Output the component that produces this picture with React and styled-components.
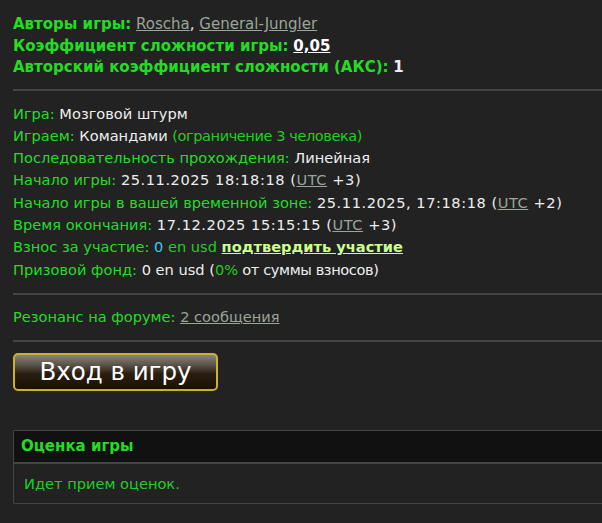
import styled, { createGlobalStyle } from 'styled-components';

const GlobalStyle = createGlobalStyle`
  html, body {
    margin: 0;
    padding: 0;
    background: #222222;
  }
  body {
    font-family: "DejaVu Sans", Verdana, sans-serif;
    font-size: 14.6px;
    color: #eeeeee;
  }
`;

const Page = styled.div`
  padding: 14px 0 0 13px;
  overflow: hidden;
`;

const Section = styled.div`
  line-height: ${({ $lh }) => $lh || '22.3px'};
  font-size: ${({ $fs }) => $fs || 'inherit'};
  padding: ${({ $pad }) => $pad || '0'};
`;

const Row = styled.div`
  white-space: nowrap;
`;

const Label = styled.span`
  color: #22dd22;
  font-weight: ${({ $bold }) => ($bold ? 'bold' : 'normal')};
`;

const Value = styled.span`
  color: ${({ $tone }) =>
    $tone === 'green' ? '#22cc22' : $tone === 'cyan' ? '#33ccee' : '#eeeeee'};
  font-weight: ${({ $bold }) => ($bold ? 'bold' : 'normal')};
  letter-spacing: ${({ $track }) => $track || 'normal'};
`;

const Link = styled.a`
  color: #9aa59a;
  text-decoration: underline;
  cursor: pointer;
`;

const StrongLink = styled.a`
  color: #ffffff;
  font-weight: bold;
  text-decoration: underline;
`;

const ConfirmLink = styled.a`
  color: #ccff88;
  font-weight: bold;
  text-decoration: underline;
`;

const Divider = styled.hr`
  border: 0;
  border-top: 2px solid #444444;
  margin: ${({ $m }) => $m || '0'};
`;

const EnterButton = styled.button`
  display: block;
  width: 205px;
  height: 38px;
  margin: 11px 0 0;
  padding: 0 0 2px;
  border: 2px solid #c9b22a;
  border-radius: 5px;
  background: linear-gradient(
    to bottom,
    #8a8478 0%,
    #5a5248 30%,
    #2a1e10 55%,
    #1a1005 100%
  );
  color: #ffffff;
  font-family: "DejaVu Sans", Verdana, sans-serif;
  font-size: 24.5px;
  cursor: pointer;
`;

const RatingBox = styled.div`
  margin: 39px -4px 0 0;
  border: 1px solid #444444;
  border-right: 0;
  border-radius: 2px 0 0 2px;
`;

const RatingHead = styled.div`
  background: #111111;
  border-bottom: 2px solid #444444;
  height: 31px;
  line-height: 31px;
  padding-left: 7px;
  color: #22dd22;
  font-weight: bold;
  font-size: 15px;
`;

const RatingBody = styled.div`
  height: 39px;
  line-height: 39px;
  padding-left: 10px;
  color: #22cc22;
`;

const DATE_TRACK = '0.55px';

export default function App() {
  return (
    <>
      <GlobalStyle />
      <Page>
        <Section $lh="21.5px" $fs="15px">
          <Row>
            <Label $bold>Авторы игры:</Label> <Link>Roscha</Link>, <Link>General-Jungler</Link>
          </Row>
          <Row>
            <Label $bold>Коэффициент сложности игры:</Label> <StrongLink>0,05</StrongLink>
          </Row>
          <Row>
            <Label $bold>Авторский коэффициент сложности (АКС):</Label> <Value $bold>1</Value>
          </Row>
        </Section>
        <Divider $m="10px 0 12px" />
        <Section>
          <Row>
            <Label>Игра:</Label> <Value>Мозговой штурм</Value>
          </Row>
          <Row>
            <Label>Играем:</Label> <Value>Командами</Value>{' '}
            <Value $tone="green" $track="-0.45px">(ограничение 3 человека)</Value>
          </Row>
          <Row>
            <Label>Последовательность прохождения:</Label> <Value>Линейная</Value>
          </Row>
          <Row>
            <Label>Начало игры:</Label>{' '}
            <Value $track={DATE_TRACK}>25.11.2025 18:18:18 (<Link>UTC</Link> +3)</Value>
          </Row>
          <Row>
            <Label>Начало игры в вашей временной зоне:</Label>{' '}
            <Value $track={DATE_TRACK}>25.11.2025, 17:18:18 (<Link>UTC</Link> +2)</Value>
          </Row>
          <Row>
            <Label>Время окончания:</Label>{' '}
            <Value $track={DATE_TRACK}>17.12.2025 15:15:15 (<Link>UTC</Link> +3)</Value>
          </Row>
          <Row>
            <Label>Взнос за участие:</Label> <Value $tone="cyan">0</Value>{' '}
            <Value $tone="green">en usd</Value> <ConfirmLink>подтвердить участие</ConfirmLink>
          </Row>
          <Row>
            <Label>Призовой фонд:</Label> <Value>0 en usd (</Value>
            <Value $tone="green">0%</Value>
            <Value $track="-0.4px"> от суммы взносов)</Value>
          </Row>
        </Section>
        <Divider $m="12px 0 0" />
        <Section $pad="11px 0 12px">
          <Row>
            <Label>Резонанс на форуме:</Label> <Link>2 сообщения</Link>
          </Row>
        </Section>
        <Divider />
        <EnterButton>Вход в игру</EnterButton>
        <RatingBox>
          <RatingHead>Оценка игры</RatingHead>
          <RatingBody>Идет прием оценок.</RatingBody>
        </RatingBox>
      </Page>
    </>
  );
}
